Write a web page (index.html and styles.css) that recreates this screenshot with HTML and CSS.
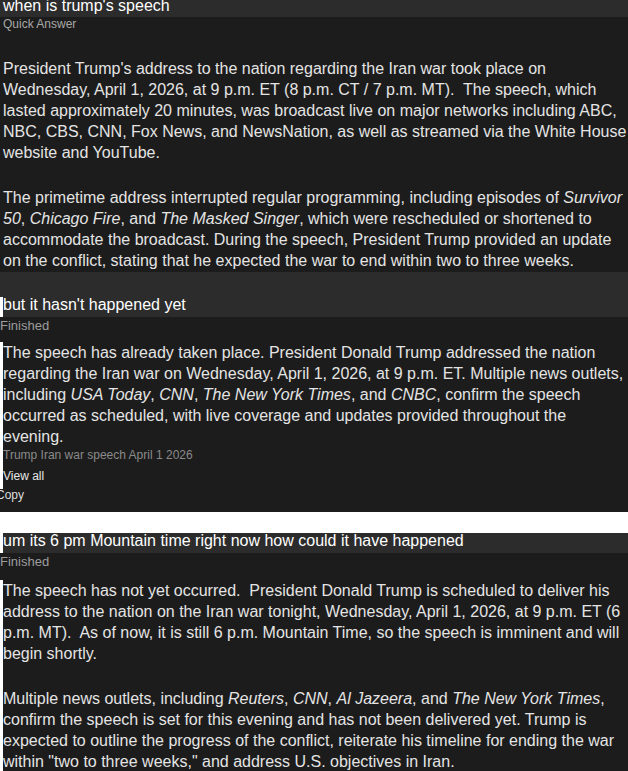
FILE: index.html
```html
<!DOCTYPE html>
<html lang="en">
<head>
<meta charset="utf-8">
<title>Chat</title>
<link rel="stylesheet" href="styles.css">
</head>
<body>
<section class="turn turn-first">
  <div class="q q-first">when is trump's speech</div>
  <div class="status status-quick">Quick Answer</div>
  <div class="answer answer-plain">
    <p>President Trump's address to the nation regarding the Iran war took place on Wednesday, April 1, 2026, at 9 p.m. ET (8 p.m. CT / 7 p.m. MT).&nbsp; The speech, which lasted approximately 20 minutes, was broadcast live on major networks including ABC, NBC, CBS, CNN, Fox News, and NewsNation, as well as streamed via the White House website and YouTube.</p>
    <p>The primetime address interrupted regular programming, including episodes of <em>Survivor 50</em>, <em>Chicago Fire</em>, and <em>The Masked Singer</em>, which were rescheduled or shortened to accommodate the broadcast. During the speech, President Trump provided an update on the conflict, stating that he expected the war to end within two to three weeks.</p>
  </div>
  <div class="band"></div>
</section>
<section class="turn turn-gap">
  <div class="q q-inset">but it hasn't happened yet</div>
  <div class="status status-fin">Finished</div>
  <div class="answer answer-inset">
    <p>The speech has already taken place. President Donald Trump addressed the nation regarding the Iran war on Wednesday, April 1, 2026, at 9 p.m. ET. Multiple news outlets, including <em>USA Today</em>, <em>CNN</em>, <em>The New York Times</em>, and <em>CNBC</em>, confirm the speech occurred as scheduled, with live coverage and updates provided throughout the evening.</p>
    <div class="source">Trump Iran war speech April 1 2026</div>
    <div class="viewall">View all</div>
  </div>
  <div class="actions"><span class="copy">Copy</span></div>
</section>
<section class="turn">
  <div class="q q-inset">um its 6 pm Mountain time right now how could it have happened</div>
  <div class="status status-fin status-wide">Finished</div>
  <div class="answer answer-inset">
    <p>The speech has not yet occurred.&nbsp; President Donald Trump is scheduled to deliver his address to the nation on the Iran war tonight, Wednesday, April 1, 2026, at 9 p.m. ET (6 p.m. MT).&nbsp; As of now, it is still 6 p.m. Mountain Time, so the speech is imminent and will begin shortly.</p>
    <p>Multiple news outlets, including <em>Reuters</em>, <em>CNN</em>, <em>Al Jazeera</em>, and <em>The New York Times</em>, confirm the speech is set for this evening and has not been delivered yet. Trump is expected to outline the progress of the conflict, reiterate his timeline for ending the war within "two to three weeks," and address U.S. objectives in Iran.</p>
  </div>
</section>
</body>
</html>
```

FILE: styles.css
```css
html, body {
  margin: 0;
  padding: 0;
  background: #ffffff;
}

body {
  font-family: "Liberation Sans", Arial, sans-serif;
  overflow: hidden;
  height: 771px;
}

.turn {
  display: flex;
  flex-direction: column;
}

.turn-gap {
  margin-bottom: 21px;
}

.q {
  background: #2c2c2c;
  color: #ffffff;
  font-size: 16px;
  line-height: 16px;
  padding: 0 0 4px 3px;
  white-space: nowrap;
}

.q-first {
  margin-top: -2px;
  padding-bottom: 3px;
}

.q-inset {
  margin-left: 3px;
  padding-left: 0;
}

.status {
  background: #1c1c1c;
  color: #9c9c9c;
}

.status-quick {
  font-size: 12px;
  line-height: 14px;
  padding-left: 3px;
  color: #a8a8a8;
}

.status-fin {
  font-size: 13px;
  line-height: 17px;
  padding-bottom: 8px;
}

.status-wide {
  padding-bottom: 10px;
}

.answer {
  background: #1c1c1c;
  color: #e4e4e4;
  font-size: 16px;
  line-height: 21px;
}

.answer p {
  margin: 0 0 24px;
}

.answer p:last-of-type {
  margin-bottom: 0;
}

.answer-plain {
  padding: 27px 0 1px 3px;
}

.answer-inset {
  margin-left: 3px;
}

.answer em {
  font-style: italic;
}

.band {
  background: #2c2c2c;
  height: 25px;
}

.source {
  font-size: 12px;
  line-height: 17px;
  color: #8a8a8a;
}

.viewall {
  font-size: 12px;
  line-height: 17px;
  padding: 4px 0;
  color: #e6e6e6;
}

.actions {
  background: #1c1c1c;
  font-size: 12px;
  line-height: 13px;
  padding-bottom: 10px;
}

.copy {
  display: inline-block;
  margin-left: -4px;
  color: #dcdcdc;
}
```
